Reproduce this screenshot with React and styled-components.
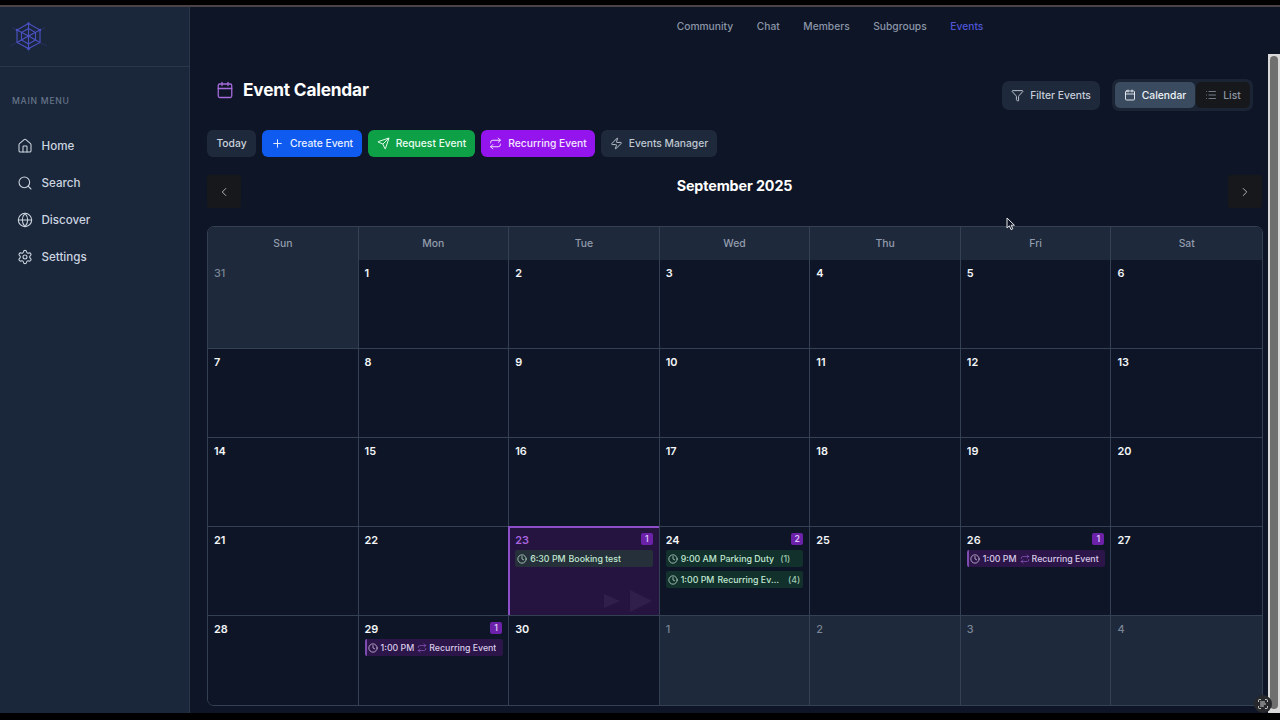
import React from "react";
import styled, { createGlobalStyle } from "styled-components";
import { House, Search, Globe, Settings, Calendar, Plus, Send, Repeat, Zap, Funnel, List, ChevronLeft, ChevronRight, Clock, ScanText } from "lucide-react";

const Global = createGlobalStyle`
  html, body { margin: 0; padding: 0; background: #000; height: 720px; overflow: hidden; }
  body { font-family: Inter, "Liberation Sans", sans-serif; -webkit-font-smoothing: antialiased; }
  * { box-sizing: border-box; }
`;
const Screen = styled.div`
  width: 1280px; height: 720px; position: relative; overflow: hidden;
  display: flex; flex-direction: column; background: #000;
`;
const TopEdge = styled.div`height: 7px; flex: none; background: #000; border-top: 5px solid #000; border-bottom: 2px solid #4b4346;`;
const BottomEdge = styled.div`height: 7px; flex: none; background: #000;`;
const Body = styled.div`flex: 1; display: flex; min-height: 0;`;
const Sidebar = styled.aside`
  width: 190px; flex: none; background: #1a2639; border-right: 1px solid #2b3749;
  display: flex; flex-direction: column;
`;
const Brand = styled.div`height: 60px; flex: none; border-bottom: 1px solid #2b3749; padding: 12px 0 0 12px;`;
const MenuLabel = styled.div`
  margin: 28px 0 0 12px; font-size: 8.6px; line-height: 12px; font-weight: 500; letter-spacing: .75px; color: #66758a;
`;
const Nav = styled.nav`margin: 30px 0 0 17px; display: flex; flex-direction: column; gap: 19px;`;
const NavItem = styled.div`
  height: 18px; display: flex; align-items: center; gap: 8.5px; font-size: 11.6px; font-weight: 500; color: #ccd5e0;
`;
const Main = styled.main`flex: 1; min-width: 0; background: #0e1526; display: flex;`;
const Content = styled.div`flex: 1; min-width: 0; display: flex; flex-direction: column;`;
const TopNav = styled.div`
  height: 37px; flex: none; display: flex; justify-content: center; align-items: center; gap: 23.6px; padding: 0 0 0 202px;
`;
const TopLink = styled.span`font-size: 10.25px; font-weight: 500; color: ${p => p.$active ? "#4f55d8" : "#8b96a8"};`;
const Page = styled.div`flex: 1; padding: 0 5px 0 17px; display: flex; flex-direction: column; min-height: 0;`;
const Header = styled.div`height: 86px; flex: none; display: flex; justify-content: space-between; align-items: flex-start; padding-top: 32px;`;
const TitleWrap = styled.div`display: flex; align-items: center; gap: 9px; padding: 2px 0 0 9px; color: #a66bdd;`;
const Title = styled.h1`margin: 0; font-size: 17.3px; line-height: 24px; font-weight: 700; letter-spacing: -.2px; color: #fff;`;
const HeaderTools = styled.div`display: flex; align-items: center; gap: 12px; padding-right: 10px; margin-top: 3px;`;
const FilterBtn = styled.div`
  width: 98px; height: 29px; border-radius: 7px; background: #1e293b; color: #c5cdd8;
  display: flex; align-items: center; justify-content: center; gap: 6px; font-size: 10.3px; font-weight: 500;
`;
const Toggle = styled.div`
  width: 141px; height: 32px; border-radius: 7px; background: #1a2434; padding: 3px; display: flex; gap: 1px;
`;
const ToggleItem = styled.div`
  height: 26px; width: ${p => p.$active ? "80px" : "54px"}; border-radius: 5px; background: ${p => p.$active ? "#3a4a5f" : "#17181c"};
  color: ${p => p.$active ? "#eef2f6" : "#8d96a3"}; display: flex; align-items: center; justify-content: center; gap: 6px;
  font-size: 10.3px; font-weight: 500;
`;
const Actions = styled.div`height: 27px; flex: none; display: flex; gap: 6px;`;
const ActionBtn = styled.div`
  width: ${p => p.$w}px; height: 27px; padding-bottom: 1px; border-radius: 6px; background: ${p => p.$bg}; color: ${p => p.$fg};
  display: flex; align-items: center; justify-content: center; gap: 6px; font-size: 10.3px; font-weight: 500;
`;
const MonthBar = styled.div`height: 33px; margin-top: 18px; flex: none; display: flex; justify-content: space-between; padding-right: 1px;`;
const Arrow = styled.div`
  width: 34px; height: 33px; border-radius: 3px; background: #17181c; color: #b0b3b8; display: flex; align-items: center; justify-content: center;
`;
const Month = styled.div`font-size: 14.3px; line-height: 22px; font-weight: 700; color: #fff; letter-spacing: -.1px;`;
const CalendarCard = styled.div`
  margin-top: 18px; width: 1056px; height: 480px; flex: none; border: 1px solid #344154; border-radius: 7px; overflow: hidden;
  display: grid; grid-template-columns: repeat(7, 1fr); grid-template-rows: 33px repeat(5, 89px);
  background: #0e1526;
`;
const DayHead = styled.div`
  background: #1e293b; border-right: ${p => p.$last ? "0" : "1px solid #344154"}; color: #929cac; font-size: 10.4px; font-weight: 500;
  display: flex; align-items: center; justify-content: center;
`;
const Cell = styled.div`
  position: relative; padding: 6px 6px 0; min-width: 0;
  border-right: ${p => p.$last ? "0" : "1px solid #344154"};
  border-bottom: ${p => p.$lastRow ? "0" : "1px solid #344154"};
  background: ${p => p.$today ? "#251340" : p.$muted ? "#1e293b" : "#0e1526"};
  ${p => p.$today && "box-shadow: -1px -1px 0 #8d4fc9, inset 1px 1px 0 #8d4fc9;"}
`;
const CellTop = styled.div`height: 14px; display: flex; justify-content: space-between; align-items: flex-start;`;
const DayNum = styled.span`
  font-size: 10.9px; line-height: 14px; font-weight: ${p => p.$muted ? 500 : 600};
  color: ${p => p.$today ? "#a564dd" : p.$muted ? "#7a8595" : "#f3f5f8"};
`;
const Badge = styled.span`
  width: 12px; height: 12px; border-radius: 2px; background: #6b21a8; color: #dcc2f5;
  font-size: 8.6px; font-weight: 600; display: flex; align-items: center; justify-content: center;
`;
const EventList = styled.div`margin-top: 3px; display: flex; flex-direction: column; gap: 4px;`;
const Pill = styled.div`
  height: 17px; border-radius: 2px; display: flex; align-items: center; gap: 3px; padding: ${p => p.$kind === "purple" ? "0 0 0 1px" : "0 3px 0 2px"};
  font-size: 8.8px; font-weight: 500; white-space: nowrap; min-width: 0;
  background: ${p => p.$kind === "purple" ? "#2c1549" : p.$kind === "muted" ? "#26303a" : "#12302c"};
  color: ${p => p.$kind === "purple" ? "#d8cbe8" : "#c0e8d2"};
  border-left: ${p => p.$kind === "purple" ? "2px solid #7e4bb0" : "0"};
  margin-right: ${p => p.$kind === "purple" ? "-1px" : "0"};
`;
const PillTitle = styled.span`flex: 0 1 auto; min-width: 0; overflow: hidden; text-overflow: ellipsis;`;
const Count = styled.span`margin-left: 3px; flex: none; color: #9cc8b0;`;
const RepeatIcon = styled(Repeat)`color: #8b55bd; flex: none; margin-right: -1px;`;
const ClockIcon = styled(Clock)`flex: none;`;
const Scroll = styled.div`width: 12px; flex: none; padding-top: 47px; display: flex;`;
const Track = styled.div`flex: 1; background: #d9d9d9; padding: 2px 2px 4px 2px; display: flex;`;
const Thumb = styled.div`flex: 1; border-radius: 4px; background: #6f6f6f;`;
const Cursor = styled.svg`position: absolute; left: 1006px; top: 217px;`;
const ScanBadge = styled.div`
  position: absolute; left: 1254px; top: 695px; width: 18px; height: 18px; border-radius: 50%; background: #26282c; color: #e5e5e5;
  display: flex; align-items: center; justify-content: center;
`;
const Ghost = styled.svg`position: absolute; left: 470px; top: 582px; opacity: .05; pointer-events: none;`;

const Logo = () => (
  <svg width="36" height="36" viewBox="0 0 36 36" fill="none" stroke="#4a50c0" strokeWidth="1.15" overflow="visible">
    <g opacity=".4" strokeWidth=".7"><path d="M28 23.5 L35 27 M5 23.5 L-2 27 M16.5 29.5 V33 M28 11 L33 8.5 M5 11 L0 8.5" /></g>
    <path d="M16.5 4.5 L28 11 V23.5 L16.5 29.5 L5 23.5 V11 Z" />
    <path d="M16.5 9.5 L23.5 13.5 V21 L16.5 25 L9.5 21 V13.5 Z" />
    <path d="M16.5 4.5 V17 M5 11 L16.5 17 L28 11 M16.5 17 V29.5 M5 23.5 L16.5 17 L28 23.5" />
    <g fill="#4a50c0" stroke="none"><circle cx="16.5" cy="4.5" r="1.3" /><circle cx="28" cy="11" r="1.3" /><circle cx="5" cy="11" r="1.3" /><circle cx="16.5" cy="29.5" r="1.6" /></g>
  </svg>
);

const days = ["Sun", "Mon", "Tue", "Wed", "Thu", "Fri", "Sat"];
const nav = [[House, "Home"], [Search, "Search"], [Globe, "Discover"], [Settings, "Settings"]];
const links = ["Community", "Chat", "Members", "Subgroups", "Events"];
const actions = [
  { w: 49, bg: "#1e293b", fg: "#ccd3dd", label: "Today" },
  { w: 100, bg: "#0f5bf0", fg: "#e8f0ff", label: "Create Event", Icon: Plus },
  { w: 107, bg: "#0ea046", fg: "#e8fbef", label: "Request Event", Icon: Send },
  { w: 114, bg: "#9314ec", fg: "#f4e6ff", label: "Recurring Event", Icon: Repeat },
  { w: 116, bg: "#1e293b", fg: "#bfc7d2", label: "Events Manager", Icon: Zap },
];
const recurring = [{ kind: "purple", time: "1:00 PM", title: "Recurring Event", repeat: true }];
const events = {
  23: [{ kind: "muted", time: "6:30 PM", title: "Booking test" }],
  24: [
    { kind: "green", time: "9:00 AM", title: "Parking Duty", count: "(1)" },
    { kind: "green", time: "1:00 PM", title: "Recurring Event", count: "(4)" },
  ],
  26: recurring,
  29: recurring,
};
const all = [{ n: 31, muted: true }];
for (let i = 1; i <= 30; i++) all.push({ n: i });
for (let i = 1; i <= 4; i++) all.push({ n: i, muted: true });

const PillView = ({ e }) => (
  <Pill $kind={e.kind}>
    <ClockIcon size={10} strokeWidth={1.8} />
    <span>{e.time}</span>
    {e.repeat && <RepeatIcon size={10} strokeWidth={1.8} />}
    <PillTitle>{e.title}</PillTitle>
    {e.count && <Count>{e.count}</Count>}
  </Pill>
);

export default function App() {
  return (
    <Screen>
      <Global />
      <TopEdge />
      <Body>
        <Sidebar>
          <Brand><Logo /></Brand>
          <MenuLabel>MAIN MENU</MenuLabel>
          <Nav>
            {nav.map(([I, t]) => (
              <NavItem key={t}><I size={16} strokeWidth={1.6} />{t}</NavItem>
            ))}
          </Nav>
        </Sidebar>
        <Main>
          <Content>
            <TopNav>
              {links.map(l => <TopLink key={l} $active={l === "Events"}>{l}</TopLink>)}
            </TopNav>
            <Page>
              <Header>
                <TitleWrap><Calendar size={18} strokeWidth={1.7} /><Title>Event Calendar</Title></TitleWrap>
                <HeaderTools>
                  <FilterBtn><Funnel size={13} strokeWidth={1.7} />Filter Events</FilterBtn>
                  <Toggle>
                    <ToggleItem $active><Calendar size={12} strokeWidth={1.8} />Calendar</ToggleItem>
                    <ToggleItem><List size={12} strokeWidth={1.6} />List</ToggleItem>
                  </Toggle>
                </HeaderTools>
              </Header>
              <Actions>
                {actions.map(({ w, bg, fg, label, Icon }) => (
                  <ActionBtn key={label} $w={w} $bg={bg} $fg={fg}>
                    {Icon && <Icon size={13} strokeWidth={1.8} />}{label}
                  </ActionBtn>
                ))}
              </Actions>
              <MonthBar>
                <Arrow><ChevronLeft size={14} strokeWidth={1.7} /></Arrow>
                <Month>September 2025</Month>
                <Arrow><ChevronRight size={14} strokeWidth={1.7} /></Arrow>
              </MonthBar>
              <CalendarCard>
                {days.map((d, i) => <DayHead key={d} $last={i === 6}>{d}</DayHead>)}
                {all.map((c, i) => {
                  const list = !c.muted && events[c.n];
                  const today = !c.muted && c.n === 23;
                  return (
                    <Cell key={i} $muted={c.muted} $today={today} $last={i % 7 === 6} $lastRow={i >= 28}>
                      <CellTop>
                        <DayNum $muted={c.muted} $today={today}>{c.n}</DayNum>
                        {list && <Badge>{list.length}</Badge>}
                      </CellTop>
                      {list && (
                        <EventList>
                          {list.map((e, j) => <PillView key={j} e={e} />)}
                        </EventList>
                      )}
                    </Cell>
                  );
                })}
              </CalendarCard>
            </Page>
          </Content>
          <Scroll><Track><Thumb /></Track></Scroll>
        </Main>
      </Body>
      <BottomEdge />
      <Cursor width="10" height="14" viewBox="0 0 10 14">
        <path d="M1 1 L1 11 L3.4 8.8 L5 12.6 L6.8 11.8 L5.2 8.2 L8.4 8.2 Z" fill="#0d1424" stroke="#e8e8e8" strokeWidth="1" />
      </Cursor>
      <Ghost width="320" height="50" viewBox="0 0 320 50" fill="#fff">
        <path d="M160 8 L182 19 L160 30 Z M134 12 L150 19 L134 26Z" />
      </Ghost>
      <ScanBadge><ScanText size={12} strokeWidth={1.8} /></ScanBadge>
    </Screen>
  );
}
